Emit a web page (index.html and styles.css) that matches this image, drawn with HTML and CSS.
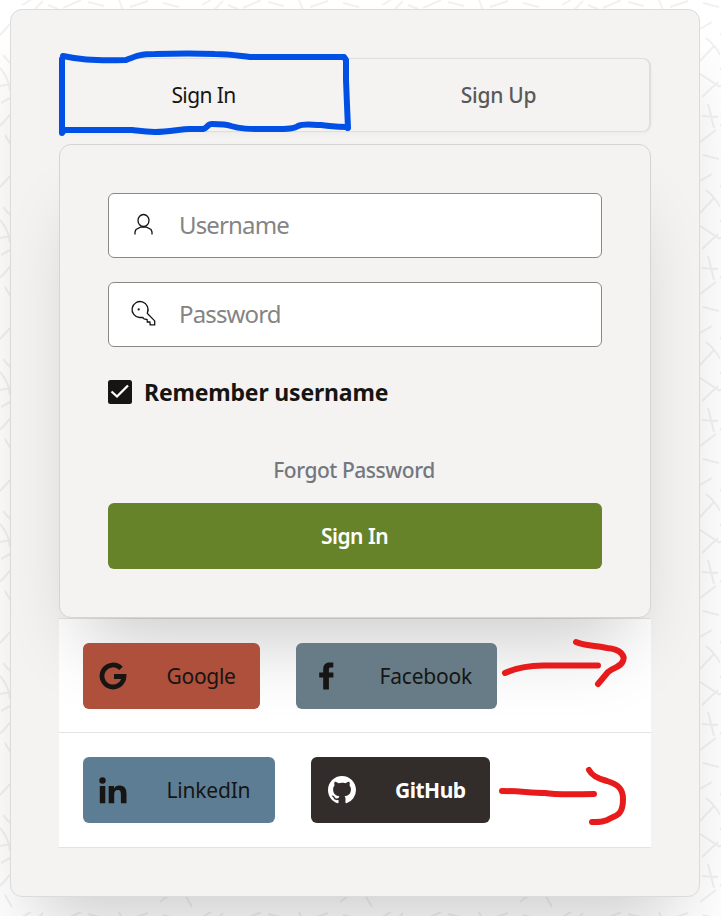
FILE: index.html
```html
<!DOCTYPE html>
<html lang="en">

<head>
  <meta charset="UTF-8">
  <meta name="viewport" content="width=device-width, initial-scale=1.0">
  <title>Sign In</title>
  <link rel="stylesheet" href="styles.css">
</head>

<body>
  <!-- page texture -->
  <svg class="texture" width="721" height="916" aria-hidden="true">
    <defs>
      <pattern id="twigs" width="180" height="152" patternUnits="userSpaceOnUse">
        <path d="M0 35L10 24M3 55L10 63M0 68Q9 78 10 91M0 86L12 84M1 103L12 97M0 126L10 115M5 135L12 147M22 5L31 0M34 10L43 1M48 5L58 9M63 8L81 0M88 2L104 6M119 0L123 10M130 7L148 1M163 3L179 7M158 30L172 22M166 38Q176 46 180 55M159 62L174 46M157 72L180 87M162 97L178 82M162 116L178 117M168 104L174 128M160 142L176 130M20 21L36 12M40 18L57 26M75 25L94 16M101 12L112 28M119 22L142 14"/>
      </pattern>
    </defs>
    <rect width="721" height="916" fill="url(#twigs)"/>
  </svg>

  <main class="card">
    <div class="tabs">
      <div class="tab active"><span>Sign In</span></div>
      <div class="tab"><span>Sign Up</span></div>
    </div>

    <form class="login">
      <label class="field">
        <svg class="icon" viewBox="0 0 28 28">
          <ellipse cx="14.5" cy="9.5" rx="5.5" ry="6"/>
          <path d="M6 23.5V21l1-2.500 5-2.500h5l5 2.500 1 2.500v2.500"/>
        </svg>
        <span>Username</span>
      </label>
      <label class="field">
        <svg class="icon" viewBox="0 0 28 28">
          <path d="M18.400 12.700A8 8 0 1 0 10.500 17.500h3.200l1.400 1.500 3 .5.2 2.500h2.600l.3 2.800h4.500v-3.900l-7.300-7.500z"/>
          <circle cx="9.700" cy="9.400" r="1.100" class="dot"/>
        </svg>
        <span>Password</span>
      </label>
      <div class="remember">
        <svg width="24" height="24" viewBox="0 0 24 24">
          <rect width="24" height="24" rx="2.5" fill="#161513"/>
          <path d="M3.500 11.500L9 16.500 20 5.500" fill="none" stroke="#fff" stroke-width="2.3"/>
        </svg>
        <span>Remember username</span>
      </div>
      <div class="forgot"><span>Forgot Password</span></div>
      <div class="submit"><span>Sign In</span></div>
    </form>

    <div class="social">
      <div class="row">
        <div class="btn google">
          <svg viewBox="0 0 28 28">
            <path d="M22 6.400A11 11 0 1 0 25 14.500H15" fill="none" stroke="currentColor" stroke-width="4.8"/>
          </svg>
          <span>Google</span>
        </div>
        <div class="btn facebook">
          <svg viewBox="0 0 28 28">
            <path d="M11.200 27.500V15.500H7.200v-5h4V7.500C11.200 3 13.500.5 17.500.5h3.800v5h-2.500c-1.500 0-1.900.6-1.900 2.100v2.900h4.500v5h-4.500v12z" fill="currentColor"/>
          </svg>
          <span>Facebook</span>
        </div>
      </div>
      <div class="row">
        <div class="btn linkedin">
          <svg viewBox="0 0 28 28">
            <circle cx="3.5" cy="4.5" r="3.2" fill="currentColor"/>
            <path d="M.8 10h5.500v17.300H.8zM9.700 10H15v2.400c.9-1.700 2.800-2.900 5.500-2.900 5.500 0 7 3.500 7 8.600v9.200h-5.600v-8.600c0-2.800-.5-4.800-3.100-4.800-2.700 0-3.600 2-3.600 4.800v8.600H9.700z" fill="currentColor"/>
          </svg>
          <span>LinkedIn</span>
        </div>
        <div class="btn github">
          <svg viewBox="0 0 16 16">
            <path fill="currentColor" d="M8 0C3.580 0 0 3.580 0 8c0 3.540 2.290 6.530 5.470 7.590.4.07.55-.17.55-.38 0-.19-.01-.82-.01-1.490-2.010.37-2.530-.49-2.690-.94-.09-.23-.48-.94-.82-1.130-.28-.15-.68-.52-.01-.53.63-.01 1.080.58 1.230.82.72 1.210 1.870.87 2.330.66.07-.52.28-.87.51-1.070-1.780-.2-3.640-.89-3.640-3.950 0-.87.31-1.590.82-2.150-.08-.2-.36-1.020.08-2.120 0 0 .67-.21 2.200.82A7.600 7.600 0 0 1 8 3.860c.68 0 1.360.09 2 .27 1.530-1.040 2.200-.82 2.200-.82.44 1.100.16 1.920.08 2.120.51.56.82 1.270.82 2.150 0 3.070-1.870 3.750-3.650 3.950.29.25.54.73.54 1.480 0 1.070-.01 1.930-.01 2.200 0 .21.15.46.55.38A8.010 8.010 0 0 0 16 8c0-4.420-3.580-8-8-8z"/>
          </svg>
          <span>GitHub</span>
        </div>
      </div>
    </div>
  </main>

  <!-- pen marks over the form -->
  <svg class="marks" width="721" height="916" aria-hidden="true">
    <g class="blue">
      <path d="M63 56C77 59 90 61 126 60C136 56 140 54 155 54Q190 53 215 54C230 54 240 56 250 57H344L346 60V80L347 105L348 128"/>
      <path d="M62 59V133L64 130H132C140 131 145 132 155 132C170 132 180 129 190 129H203C208 128 207 124 212 124C221 124 226 124 231 126C240 129 249 129 264 129C279 129 293 130 298 126C304 123 312 125 321 125C332 126 335 127 347 127"/>
    </g>
    <g class="red">
      <path d="M505 673Q520 666 543 665.500H598"/>
      <path d="M576 642C585 646 593 645 607 648C622 649 625 657 623 661C620 668 615 666 608 672L598 684"/>
      <path d="M502 791C520 791 530 793 545 793Q555 795 594 794"/>
      <path d="M589 770C592 776 599 779 607 781C617 784 623 788 623 799C623 812 619 815 611 818C605 822 600 822 592 822"/>
    </g>
  </svg>
</body>

</html>
```

FILE: styles.css
```css
* {
  box-sizing: border-box;
}

body {
  position: relative;
  margin: 0;
  height: 916px;
  padding: 9px 21px 19px 10px;
  overflow: hidden;
  background: #fff;
  color: #161513;
  font-family: "Noto Sans", "Open Sans", sans-serif;
  font-size: 21px;
}

.texture,
.marks {
  position: absolute;
  top: 0;
  left: 0;
}

.texture path {
  fill: none;
  stroke: #f1f1f1;
  stroke-width: 2;
}

.card {
  position: relative;
  height: 888px;
  padding: 48px;
  border: 1px solid #dcdbda;
  border-radius: 12px;
  background: #f4f3f1;
  box-shadow: 0 48px 72px -24px rgba(0, 0, 0, 0.2);
}

.tabs {
  display: flex;
  height: 74px;
  margin-bottom: 12px;
  border: 1px solid #dfdedc;
  border-right-width: 2px;
  border-radius: 8px;
  box-shadow: 0 2px 4px rgba(0, 0, 0, 0.03);
}

.tab {
  flex: 1;
  display: flex;
  align-items: center;
  justify-content: center;
  padding-right: 7px;
  color: #5b5957;
  font-weight: 500;
  letter-spacing: -0.25px;
}

.active {
  padding-right: 8px;
  color: #161513;
  font-weight: 400;
  letter-spacing: -0.6px;
}

.login {
  position: relative;
  height: 474px;
  padding: 48px;
  border: 1px solid #d5d4d2;
  border-radius: 12px;
  background: #f4f3f1;
  box-shadow: 0 48px 72px -24px rgba(0, 0, 0, 0.2);
}

.field {
  display: flex;
  align-items: center;
  height: 65px;
  margin-bottom: 24px;
  padding: 0 0 2px 20px;
  border: 1px solid #898886;
  border-radius: 6px;
  background: #fff;
  color: #858483;
  font-size: 24px;
  letter-spacing: -0.85px;
}

.icon {
  width: 28px;
  height: 28px;
  margin-right: 22px;
  fill: none;
  stroke: #161513;
  stroke-width: 1.3;
}

.icon .dot {
  fill: #161513;
  stroke: none;
}

.remember {
  display: flex;
  align-items: center;
  gap: 12px;
  height: 24px;
  margin-top: 33px;
  font-size: 23px;
  font-weight: 700;
  letter-spacing: -0.18px;
}

.forgot {
  display: flex;
  align-items: center;
  justify-content: center;
  height: 30px;
  margin: 51px 0 18px;
  padding-right: 2px;
  color: #737780;
  font-weight: 500;
  letter-spacing: -0.45px;
}

.submit {
  display: flex;
  align-items: center;
  justify-content: center;
  height: 66px;
  padding-right: 1px;
  border-radius: 6px;
  background: #67832a;
  color: #fff;
  font-weight: 600;
  letter-spacing: -0.5px;
}

.social {
  background: #fff;
}

.row {
  display: flex;
  gap: 36px;
  height: 115px;
  padding: 24px 24px 0;
  border-bottom: 1px solid #e3e3e3;
}

.row:first-child {
  border-top: 1px solid #e3e3e3;
}

/* buttons stay above the shadow of the login panel */
.btn {
  position: relative;
  display: flex;
  align-items: center;
  height: 66px;
  padding-left: 16px;
  border-radius: 6px;
  letter-spacing: -0.2px;
}

.btn svg {
  flex: none;
  width: 28px;
  height: 28px;
  margin-right: 39.5px;
}

.google {
  width: 177px;
  background: #ae503c;
}

.google span {
  letter-spacing: -0.3px;
}

.facebook {
  width: 201px;
  background: #677c87;
}

.linkedin {
  width: 192px;
  background: #5d7d95;
}

.github {
  width: 179px;
  background: #322d2a;
  color: #fff;
  font-weight: 700;
  letter-spacing: -0.5px;
}

.github svg {
  margin-left: 0.5px;
}

.marks path {
  fill: none;
  stroke-linecap: round;
  stroke-linejoin: round;
}

.blue path {
  stroke: #0050e6;
  stroke-width: 6;
}

.red path {
  stroke: #e81b1c;
  stroke-width: 6;
}
```
